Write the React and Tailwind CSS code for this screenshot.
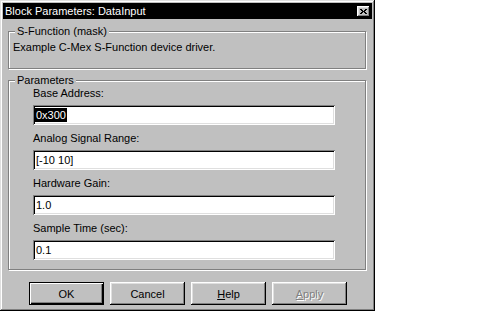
import React from 'react';

const raised =
  'shadow-[inset_-1px_-1px_#000,inset_1px_1px_#fff,inset_-2px_-2px_#808080,inset_2px_2px_#dfdfdf]';
const sunken =
  'shadow-[inset_1px_1px_#808080,inset_-1px_-1px_#fff,inset_2px_2px_#000,inset_-2px_-2px_#dfdfdf]';
const etched = 'border border-[#808080] shadow-[inset_1px_1px_#fff,1px_1px_#fff]';

const CloseGlyph = () => (
  <svg width="7" height="5" viewBox="0 0 7 5" shapeRendering="crispEdges">
    <rect x="0" y="0" width="2" height="1" fill="#000" />
    <rect x="5" y="0" width="2" height="1" fill="#000" />
    <rect x="1" y="1" width="2" height="1" fill="#000" />
    <rect x="4" y="1" width="2" height="1" fill="#000" />
    <rect x="2" y="2" width="3" height="1" fill="#000" />
    <rect x="1" y="3" width="2" height="1" fill="#000" />
    <rect x="4" y="3" width="2" height="1" fill="#000" />
    <rect x="0" y="4" width="2" height="1" fill="#000" />
    <rect x="5" y="4" width="2" height="1" fill="#000" />
  </svg>
);

const GroupLabel = ({ children }) => (
  <div className="absolute left-[6px] -top-[7px] px-[2px] bg-[#c0c0c0] leading-[12px]">
    {children}
  </div>
);

const Field = ({ label, value, selected, first }) => (
  <div className={first ? '' : 'mt-[7px]'}>
    <div className="h-[12px] leading-[12px]">{label}</div>
    <div className={`mt-[6px] w-[302px] h-[20px] bg-white flex items-center pl-[2px] ${sunken}`}>
      {selected ? (
        <span className="bg-black text-white leading-[14px] px-[1px]">{value}</span>
      ) : (
        <span className="leading-[14px] pl-[1px]">{value}</span>
      )}
    </div>
  </div>
);

const Button = ({ children, isDefault, disabled }) => (
  <div
    className={`w-[75px] h-[23px] flex items-center justify-center leading-[12px] ${
      isDefault
        ? 'border border-black shadow-[inset_1px_1px_#fff,inset_-1px_-1px_#000,inset_-2px_-2px_#808080]'
        : raised
    } ${disabled ? 'text-[#808080] [text-shadow:1px_1px_#fff]' : 'text-black'}`}
  >
    {children}
  </div>
);

export default function App() {
  const fields = [
    { label: 'Base Address:', value: '0x300', selected: true },
    { label: 'Analog Signal Range:', value: '[-10 10]' },
    { label: 'Hardware Gain:', value: '1.0' },
    { label: 'Sample Time (sec):', value: '0.1' },
  ];

  return (
    <div className="w-[493px] h-[334px] bg-white font-['Liberation_Sans',Arial,sans-serif] text-[11px] text-black">
      <div
        className={`w-[375px] h-[311px] bg-[#c0c0c0] p-[3px] flex flex-col shadow-[inset_-1px_-1px_#000,inset_1px_1px_#dfdfdf,inset_-2px_-2px_#808080,inset_2px_2px_#fff]`}
      >
        {/* Title bar */}
        <div className="h-[16px] bg-black flex items-center justify-between pl-[2px] pr-[2px]">
          <span className="text-white leading-[12px]">Block Parameters: DataInput</span>
          <div className={`w-[13px] h-[11px] bg-[#c0c0c0] flex items-center justify-center ${raised}`}>
            <CloseGlyph />
          </div>
        </div>

        <div className="flex flex-col px-[5px]">
          {/* S-Function group */}
          <div className={`relative mt-[12px] w-[358px] h-[38px] pt-[9px] pl-[4px] ${etched}`}>
            <GroupLabel>S-Function (mask)</GroupLabel>
            <div className="leading-[12px]">Example C-Mex S-Function device driver.</div>
          </div>

          {/* Parameters group */}
          <div className={`relative mt-[11px] w-[358px] h-[190px] pt-[6px] pl-[24px] ${etched}`}>
            <GroupLabel>Parameters</GroupLabel>
            {fields.map((f, i) => (
              <Field key={f.label} {...f} first={i === 0} />
            ))}
          </div>
        </div>

        {/* Buttons */}
        <div className="mt-[12px] pl-[26px] flex gap-[6px]">
          <Button isDefault>OK</Button>
          <Button>Cancel</Button>
          <Button>
            <span><span className="underline">H</span>elp</span>
          </Button>
          <Button disabled>
            <span><span className="underline">A</span>pply</span>
          </Button>
        </div>
      </div>
    </div>
  );
}
